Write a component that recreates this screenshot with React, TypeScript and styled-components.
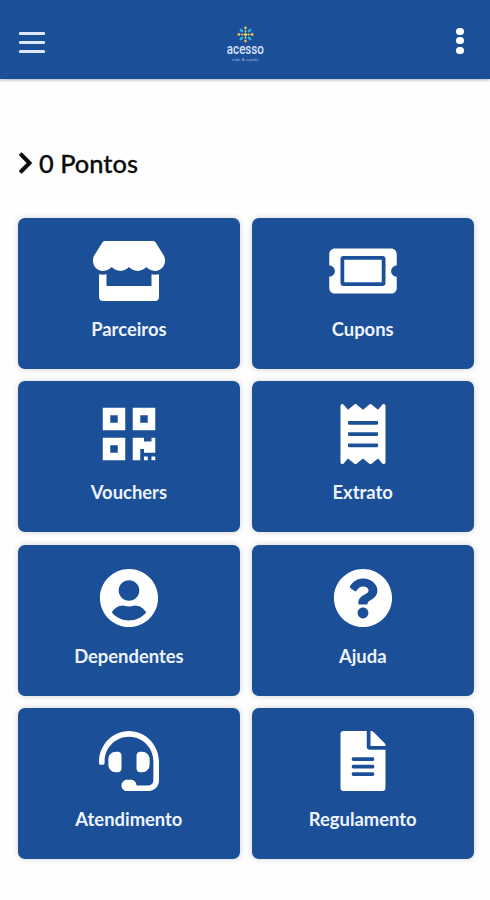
import React from 'react';
import styled, { createGlobalStyle } from 'styled-components';
import type { IconType } from 'react-icons';
import {
  FaChevronRight,
  FaFileAlt,
  FaHeadset,
  FaQrcode,
  FaQuestionCircle,
  FaReceipt,
  FaStore,
  FaTicketAlt,
  FaUserCircle,
} from 'react-icons/fa';

const BLUE = '#1b4f98';

const GlobalStyle = createGlobalStyle`
  * { box-sizing: border-box; }
  body {
    margin: 0;
    background: #fefefe;
    font-family: Lato, "Liberation Sans", sans-serif;
  }
`;

const Screen = styled.div`
  width: 490px;
  height: 900px;
  overflow: hidden;
  background: #fefefe;
`;

const Header = styled.header`
  display: grid;
  grid-template-columns: 1fr auto 1fr;
  align-items: start;
  height: 79px;
  padding: 26px 26.5px 0 19px;
  background: ${BLUE};
  box-shadow: 0 1px 3px rgba(0, 0, 0, 0.3);
`;

const MenuButton = styled.button`
  display: flex;
  flex-direction: column;
  gap: 6px;
  width: 26px;
  margin: 6px 0 0;
  padding: 0;
  border: 0;
  background: none;
`;

const MenuBar = styled.span`
  height: 3px;
  border-radius: 1px;
  background: #dce8fb;
`;

const Logo = styled.div`
  display: flex;
  flex-direction: column;
  align-items: center;
  width: 44px;
  margin-left: 8px;
  color: #d5e2f5;
`;

const LogoMark = styled.svg`
  display: block;
  width: 17px;
  height: 17px;
`;

const LogoName = styled.span`
  font: 500 14px/13px Roboto, sans-serif;
  transform: scaleX(0.83);
`;

const LogoTagline = styled.span`
  margin-top: 1px;
  font: 400 4.2px/5px "Open Sans", sans-serif;
  letter-spacing: 0.1px;
  color: #a9c2e6;
  white-space: nowrap;
`;

const MoreButton = styled.button`
  display: flex;
  flex-direction: column;
  justify-self: end;
  gap: 2.4px;
  margin: 1.6px 0 0;
  padding: 0;
  border: 0;
  background: none;
`;

const MoreDot = styled.span`
  width: 7.2px;
  height: 7.2px;
  border-radius: 50%;
  background: #fff;
`;

const Points = styled.h1`
  display: flex;
  align-items: center;
  height: 30px;
  margin: 69px 0 40px;
  padding-left: 18px;
  gap: 6px;
  font-size: 25.4px;
  font-weight: 500;
  line-height: 30px;
  color: #0c0c0c;
  -webkit-text-stroke: 0.3px #0c0c0c;

  svg {
    width: 15px;
    height: 24px;
    stroke: #0c0c0c;
    stroke-width: 10;
  }
`;

const Tiles = styled.main`
  display: grid;
  grid-template-columns: repeat(2, 221.8px);
  grid-auto-rows: 151px;
  gap: 12.4px 12px;
  padding-left: 18px;
`;

const Tile = styled.a`
  display: flex;
  flex-direction: column;
  align-items: center;
  padding-top: 23px;
  border-radius: 7px;
  background: ${BLUE};
  box-shadow: 0 0 6px rgba(0, 0, 0, 0.18);
  color: #fff;

  svg {
    display: block;
    flex: none;
    width: 76px;
    height: 60px;
  }
`;

const TileLabel = styled.span`
  margin-top: 17px;
  font-size: 18.4px;
  font-weight: 700;
  line-height: 22px;
  color: #eef4ff;
`;

const tiles: { label: string; icon: IconType }[] = [
  { label: 'Parceiros', icon: FaStore },
  { label: 'Cupons', icon: FaTicketAlt },
  { label: 'Vouchers', icon: FaQrcode },
  { label: 'Extrato', icon: FaReceipt },
  { label: 'Dependentes', icon: FaUserCircle },
  { label: 'Ajuda', icon: FaQuestionCircle },
  { label: 'Atendimento', icon: FaHeadset },
  { label: 'Regulamento', icon: FaFileAlt },
];

function Burst() {
  return (
    <LogoMark viewBox="-9 -9 18 18" aria-hidden="true">
      {[0, 90, 180, 270].map((angle) => (
        <g key={angle} transform={`rotate(${angle})`}>
          <path d="M0 0V-5" stroke="#a9a763" strokeWidth="1" />
          <circle cy="-7" r="1.5" fill="#e3bd50" />
          <circle cy="-3.4" r="1" fill="#d9c365" />
          <path d="M3.6 -3.6L5 -5" stroke="#35b0e4" strokeWidth="2.6" strokeLinecap="round" />
        </g>
      ))}
      <circle r="1.7" fill="#f0c65a" />
    </LogoMark>
  );
}

export default function App() {
  return (
    <Screen>
      <GlobalStyle />
      <Header>
        <MenuButton aria-label="Menu">
          <MenuBar />
          <MenuBar />
          <MenuBar />
        </MenuButton>
        <Logo>
          <Burst />
          <LogoName>acesso</LogoName>
          <LogoTagline>vida &amp; saúde</LogoTagline>
        </Logo>
        <MoreButton aria-label="Mais opções">
          <MoreDot />
          <MoreDot />
          <MoreDot />
        </MoreButton>
      </Header>
      <Points>
        <FaChevronRight />
        <span>0 Pontos</span>
      </Points>
      <Tiles>
        {tiles.map(({ label, icon: Icon }) => (
          <Tile key={label}>
            <Icon />
            <TileLabel>{label}</TileLabel>
          </Tile>
        ))}
      </Tiles>
    </Screen>
  );
}
